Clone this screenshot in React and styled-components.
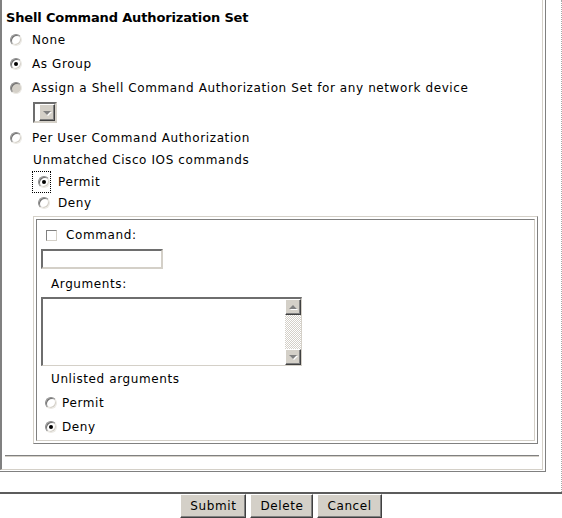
import styled, { createGlobalStyle } from 'styled-components';

const GlobalStyle = createGlobalStyle`
  html, body { margin: 0; padding: 0; background: #fff; }
  body {
    font-family: "DejaVu Sans", Verdana, sans-serif;
    font-size: 12px;
    letter-spacing: 0.6px;
    color: #000;
  }
`;

const Screen = styled.div`
  width: 562px;
  height: 518px;
  display: flex;
  flex-direction: column;
  overflow: hidden;
`;

const UpperFrame = styled.div`
  height: 492px;
  flex: none;
  box-sizing: border-box;
  border-right: 1px dotted #a8a8a8;
  overflow: hidden;
`;

const OuterTable = styled.div`
  width: 546px;
  box-sizing: border-box;
  border-right: 1px solid #808080;
  border-bottom: 1px solid #808080;
  padding: 0 2px 1px 0;
`;

const OuterCell = styled.div`
  border-left: 2px solid #808080;
  border-right: 1px solid #d4d0c8;
  border-bottom: 1px solid #d4d0c8;
  padding: 8px 0 12px 0;
`;

const Heading = styled.div`
  height: 20px;
  line-height: 20px;
  padding-left: 4px;
  font-size: 13px;
  font-weight: bold;
  letter-spacing: -0.15px;
`;

const Row = styled.div`
  display: flex;
  align-items: center;
  height: ${(p) => p.$h || 24}px;
  padding-left: ${(p) => p.$indent || 0}px;
  margin-top: ${(p) => p.$mt || 0}px;
  white-space: nowrap;
`;

const Label = styled.span`
  margin-left: ${(p) => p.$gap || 0}px;
`;

const Radio = styled.span`
  display: inline-block;
  position: relative;
  flex: none;
  box-sizing: border-box;
  width: 12px;
  height: 12px;
  border-radius: 50%;
  border: 1px solid;
  border-color: #8c8c8c #ebe9e4 #ebe9e4 #8c8c8c;
  box-shadow: inset 1px 1px 0 #707070, inset -1px -1px 0 #d4d0c8;
  background: ${(p) => (p.$disabled ? '#d4d0c8' : '#fff')};
  margin-left: ${(p) => p.$ml || 0}px;

  &::after {
    content: '';
    display: ${(p) => (p.$checked ? 'block' : 'none')};
    position: absolute;
    left: 3px;
    top: 3px;
    width: 4px;
    height: 4px;
    border-radius: 50%;
    background: #000;
  }
`;

const FocusBox = styled.span`
  display: inline-flex;
  align-items: center;
  box-sizing: border-box;
  height: 22px;
  padding-left: 5px;
  border: 1px dotted #000;
  margin-left: ${(p) => p.$ml || 0}px;
`;

const Checkbox = styled.span`
  display: inline-block;
  flex: none;
  box-sizing: border-box;
  width: 11px;
  height: 11px;
  border: 1px solid;
  border-color: #808080 #d4d0c8 #d4d0c8 #808080;
  background: #fff;
  margin-left: ${(p) => p.$ml || 0}px;
`;

const Sunken = styled.div`
  box-sizing: border-box;
  border: 2px solid;
  border-color: #6e6e6e #d4d0c8 #d4d0c8 #6e6e6e;
  background: #fff;
`;

const SelectBox = styled(Sunken)`
  width: 24px;
  height: 21px;
  margin: 2px 0 0 31px;
  display: flex;
  justify-content: flex-end;
`;

const Raised = styled.div`
  box-sizing: border-box;
  background: #d4d0c8;
  border: 1px solid;
  border-color: #fff #404040 #404040 #fff;
  box-shadow: inset -1px -1px 0 #808080;
  display: flex;
  align-items: center;
  justify-content: center;
`;

const DropButton = styled(Raised)`
  width: 16px;
  height: 17px;
`;

const Arrow = styled.span`
  width: 0;
  height: 0;
  border-left: 4px solid transparent;
  border-right: 4px solid transparent;
  ${(p) =>
    p.$up
      ? 'border-bottom: 4px solid #808080;'
      : 'border-top: 4px solid #808080;'}
  filter: drop-shadow(1px 1px 0 #fff);
`;

const InnerTable = styled.div`
  width: 505px;
  box-sizing: border-box;
  margin: 3px 0 0 31px;
  padding: 2px;
  border: 1px solid;
  border-color: #d4d0c8 #808080 #808080 #d4d0c8;
`;

const InnerCell = styled.div`
  border: 1px solid;
  border-color: #808080 #d4d0c8 #d4d0c8 #808080;
`;

const TextInput = styled(Sunken)`
  width: 122px;
  height: 20px;
  margin: 3px 0 0 4px;
`;

const TextArea = styled(Sunken)`
  width: 261px;
  height: 69px;
  margin-left: 4px;
  display: flex;
  justify-content: flex-end;
  border-right-width: 1px;
  border-bottom-width: 1px;
`;

const ScrollBar = styled.div`
  width: 16px;
  display: flex;
  flex-direction: column;
  background: repeating-conic-gradient(#d4d0c8 0 25%, #fff 0 50%) 0 0 / 2px 2px;
`;

const ScrollButton = styled(Raised)`
  width: 16px;
  height: 16px;
`;

const Track = styled.div`
  flex: 1;
`;

const Rule = styled.div`
  margin: 11px 3px 0 3px;
  border-top: 1px solid #808080;
  border-bottom: 1px solid #d4d0c8;
`;

const ButtonBar = styled.div`
  flex: 1;
  border-top: 2px solid #5c5c5c;
  display: flex;
  justify-content: center;
  gap: 4px;
`;

const Button = styled.button`
  height: 24px;
  padding: 0 9px;
  font-family: "DejaVu Sans", Verdana, sans-serif;
  font-size: 12px;
  letter-spacing: 0.6px;
  color: #000;
  background: #d4d0c8;
  border: 1px solid;
  border-color: #fff #404040 #404040 #fff;
  box-shadow: inset -1px -1px 0 #808080;
  border-radius: 0;
`;

export default function App() {
  return (
    <Screen>
      <GlobalStyle />
      <UpperFrame>
        <OuterTable>
          <OuterCell>
            <Heading>Shell Command Authorization Set</Heading>
            <Row $indent={8}>
              <Radio />
              <Label $gap={10}>None</Label>
            </Row>
            <Row $indent={8}>
              <Radio $checked />
              <Label $gap={10}>As Group</Label>
            </Row>
            <Row $indent={8}>
              <Radio $disabled />
              <Label $gap={10}>Assign a Shell Command Authorization Set for any network device</Label>
            </Row>
            <SelectBox>
              <DropButton>
                <Arrow />
              </DropButton>
            </SelectBox>
            <Row $indent={8} $mt={3}>
              <Radio />
              <Label $gap={10}>Per User Command Authorization</Label>
            </Row>
            <Row $indent={31} $h={20}>
              Unmatched Cisco IOS commands
            </Row>
            <Row $h={22} $mt={1}>
              <FocusBox $ml={30}>
                <Radio $checked />
              </FocusBox>
              <Label $gap={7}>Permit</Label>
            </Row>
            <Row $h={20}>
              <Radio $ml={36} />
              <Label $gap={8}>Deny</Label>
            </Row>
            <InnerTable>
              <InnerCell>
                <Row $h={22} $mt={4}>
                  <Checkbox $ml={9} />
                  <Label $gap={9}>Command:</Label>
                </Row>
                <TextInput />
                <Row $h={26} $mt={2} $indent={14}>
                  Arguments:
                </Row>
                <TextArea>
                  <ScrollBar>
                    <ScrollButton>
                      <Arrow $up />
                    </ScrollButton>
                    <Track />
                    <ScrollButton>
                      <Arrow />
                    </ScrollButton>
                  </ScrollBar>
                </TextArea>
                <Row $h={26} $indent={14}>
                  Unlisted arguments
                </Row>
                <Row $h={22} $indent={8}>
                  <Radio />
                  <Label $gap={5}>Permit</Label>
                </Row>
                <Row $h={26} $indent={8}>
                  <Radio $checked />
                  <Label $gap={5}>Deny</Label>
                </Row>
              </InnerCell>
            </InnerTable>
            <Rule />
          </OuterCell>
        </OuterTable>
      </UpperFrame>
      <ButtonBar>
        <Button>Submit</Button>
        <Button>Delete</Button>
        <Button>Cancel</Button>
      </ButtonBar>
    </Screen>
  );
}
